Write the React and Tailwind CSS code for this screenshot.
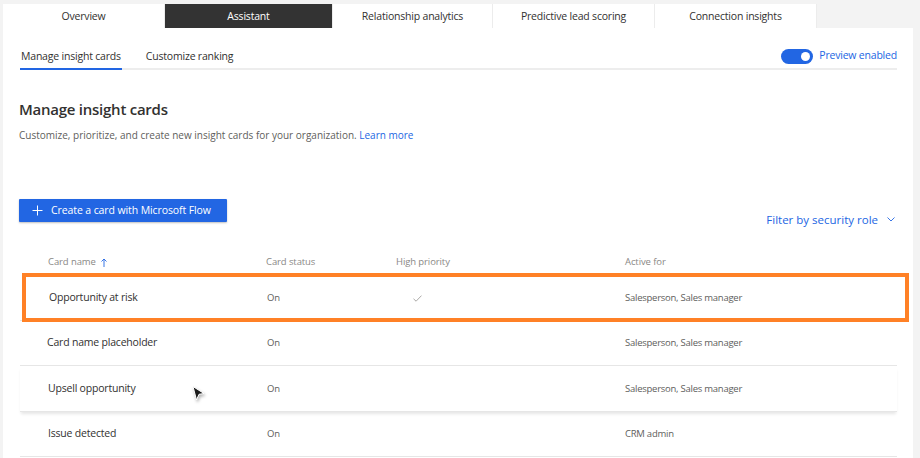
export default function App() {
    const tabs = [
        { label: 'Overview', w: 'w-[162px]' },
        { label: 'Assistant', w: 'w-[168px]', active: true },
        { label: 'Relationship analytics', w: 'w-[160px]' },
        { label: 'Predictive lead scoring', w: 'w-[162px]' },
        { label: 'Connection insights', w: 'w-[162px]' },
    ];

    const rows = [
        { name: 'Opportunity at risk', status: 'On', priority: true, active: 'Salesperson, Sales manager', h: 'h-[45px]', nameX: 'pl-[29px]' },
        { name: 'Card name placeholder', status: 'On', active: 'Salesperson, Sales manager', h: 'h-[45px]', nameX: 'pl-[27px]' },
        { name: 'Upsell opportunity', status: 'On', active: 'Salesperson, Sales manager', h: 'h-[46px]', nameX: 'pl-[28px]', hover: true },
        { name: 'Issue detected', status: 'On', active: 'CRM admin', h: 'h-[45px]', nameX: 'pl-[28px]' },
    ];

    return (
        <div className="relative w-[920px] h-[458px] overflow-hidden bg-[#f3f3f3] text-[#323130]" style={{ fontFamily: '"Open Sans", "Noto Sans", sans-serif' }}>
            {/* Top tabs */}
            <div className="flex pt-[4px] pl-[3px]">
                {tabs.map((t) => (
                    <div
                        key={t.label}
                        className={`${t.w} h-[24px] pt-[1px] flex items-center justify-center text-[10.5px] tracking-[-0.2px] border-r border-[#ececec] ${t.active ? 'bg-[#333333] text-white' : 'bg-white text-[#323130]'}`}
                    >
                        {t.label}
                    </div>
                ))}
            </div>

            {/* Panel */}
            <div className="ml-[3px] w-[910px] h-[430px] bg-white pl-[17px] pr-[16px]">
                {/* Sub tabs */}
                <div className="flex items-end justify-between h-[42px] border-b-2 border-[#ededed]">
                    <div className="flex items-end gap-[24px] -mb-[2px]">
                        <div className="text-[10.5px] tracking-[-0.2px] pb-[3px] border-b-2 border-[#2266e3] px-[1px]">Manage insight cards</div>
                        <div className="text-[10.5px] tracking-[-0.2px] pb-[3px] border-b-2 border-transparent">Customize ranking</div>
                    </div>
                    <div className="flex items-center gap-[6px] pb-[4px]">
                        <div className="w-[32px] h-[15px] rounded-full bg-[#2266e3] flex items-center justify-end pr-[3px]">
                            <div className="w-[9px] h-[9px] rounded-full bg-white" />
                        </div>
                        <span className="text-[10.5px] tracking-[-0.2px] text-[#2266e3]">Preview enabled</span>
                    </div>
                </div>

                {/* Heading */}
                <h1 className="mt-[28px] text-[15px] font-semibold tracking-[-0.25px] leading-[22px] text-[#323130] -ml-[1px]">Manage insight cards</h1>
                <p className="mt-[8px] text-[10px] text-[#605e5c] -ml-[1px]">
                    Customize, prioritize, and create new insight cards for your organization. <span className="text-[#2266e3]">Learn more</span>
                </p>

                {/* Actions */}
                <div className="mt-[56px] flex items-start justify-between -ml-[1px]">
                    <button className="h-[23px] w-[208px] bg-[#2266e3] text-white text-[10.5px] tracking-[-0.1px] flex items-center gap-[8px] pl-[13px] rounded-[1px] shadow-[0_1px_2px_rgba(0,0,0,0.25)]">
                        <svg width="11" height="11" viewBox="0 0 11 11" fill="none" stroke="white" strokeWidth="1">
                            <path d="M5.5 0.5v10M0.5 5.5h10" />
                        </svg>
                        Create a card with Microsoft Flow
                    </button>
                    <div className="mt-[12px] flex items-center gap-[9px] text-[11.5px] text-[#2266e3] pr-[2px]">
                        <span>Filter by security role</span>
                        <svg width="8" height="5" viewBox="0 0 8 5" fill="none" stroke="#2266e3" strokeWidth="0.9">
                            <path d="M0.5 0.5l3.5 3.5 3.5-3.5" />
                        </svg>
                    </div>
                </div>

                {/* Table */}
                <div className="relative mt-[20px]">
                    <div className="flex items-center h-[28px] text-[9.5px] tracking-[-0.1px] text-[#8a8886]">
                        <div className="w-[246px] pl-[28px] flex items-center gap-[5px]">
                            Card name
                            <svg width="6" height="9" viewBox="0 0 6 9" fill="none" stroke="#2266e3" strokeWidth="0.9">
                                <path d="M3 9V1M0.5 3.5L3 1l2.5 2.5" />
                            </svg>
                        </div>
                        <div className="w-[130px]">Card status</div>
                        <div className="w-[229px]">High priority</div>
                        <div>Active for</div>
                    </div>

                    {rows.map((r) => (
                        <div
                            key={r.name}
                            className={`flex items-center ${r.h} border-b border-[#e6e6e6] ${r.hover ? 'shadow-[0_3px_3px_-1px_rgba(0,0,0,0.1)]' : ''}`}
                        >
                            <div className={`w-[246px] ${r.nameX} text-[10.5px] tracking-[-0.2px] text-[#323130]`}>{r.name}</div>
                            <div className="w-[130px] pl-[1px] text-[9.5px] tracking-[-0.2px] text-[#605e5c]">{r.status}</div>
                            <div className="w-[229px] pl-[17px]">
                                {r.priority && (
                                    <svg width="9" height="7" viewBox="0 0 9 7" fill="none" stroke="#a19f9d" strokeWidth="0.9">
                                        <path d="M0.5 3.8l2.6 2.4L8.5 0.6" />
                                    </svg>
                                )}
                            </div>
                            <div className="text-[9.5px] tracking-[-0.25px] text-[#605e5c]">{r.active}</div>
                        </div>
                    ))}

                    {/* Highlight box */}
                    <div className="absolute left-[2px] top-[25px] w-[887px] h-[49px] border-[4px] border-[#ff8126] pointer-events-none" />
                </div>
            </div>

            {/* Mouse cursor */}
            <svg className="absolute left-[191px] top-[385px]" width="16" height="18" viewBox="0 0 16 18" style={{ filter: 'drop-shadow(1px 2px 1.5px rgba(0,0,0,0.3))' }}>
                <path d="M2 1.5L13 8.5l-5 .8L5.5 15z" fill="#1b1b1b" stroke="white" strokeWidth="1" strokeLinejoin="round" />
            </svg>
        </div>
    );
}
